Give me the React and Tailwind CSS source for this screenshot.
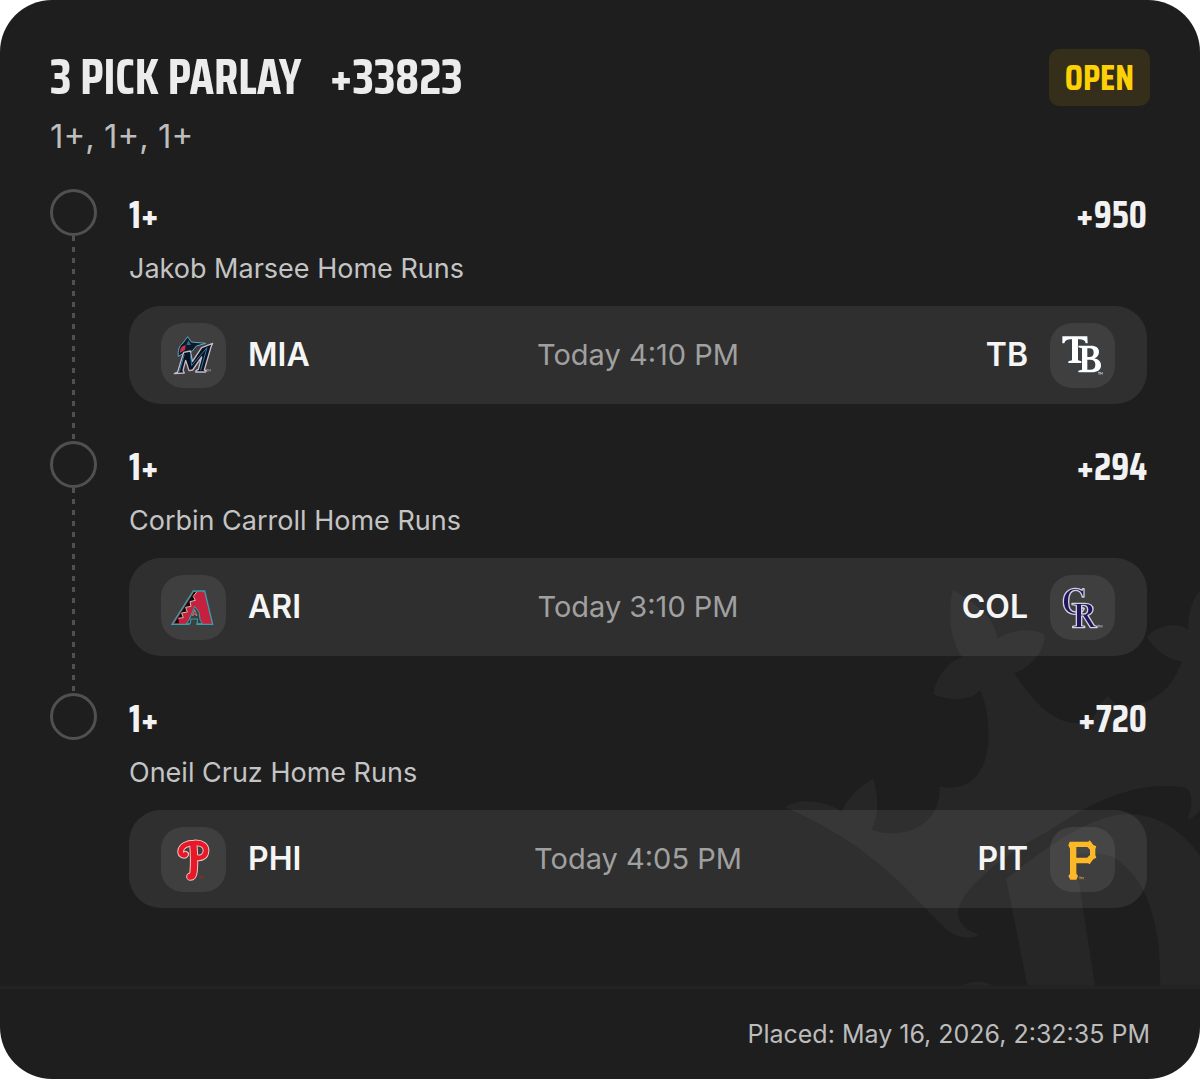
import React from "react";

const display = "font-['Saira_Condensed','Roboto_Condensed','Open_Sans_Condensed','Liberation_Sans_Narrow',sans-serif] font-bold";

function TradeMark({ x, y, color }) {
  return (
    <path
      d={`M${x} ${y - 7} h6 m-3 0 v7 M${x + 7} ${y} v-7 l3 4 l3 -4 v7`}
      fill="none"
      stroke={color}
      strokeWidth="1.5"
    />
  );
}

function Marlins() {
  return (
    <svg viewBox="0 0 195 195" className="h-full w-full" aria-hidden="true">
      <g strokeLinejoin="round">
        <path d="M52 100 C50 84 54 68 66 60 L80 41 L91 57 L134 61 L106 69 L94 84 L66 92 Z" fill="#101a26" stroke="#5fa9c4" strokeWidth="3" />
        <path d="M57 90 C56 76 64 68 74 67 L72 80 Z" fill="#c8324d" />
        <path d="M76 66 L82 52 L90 66 Z" fill="#2c6f92" />
        <path d="M40 152 L50 147 L68 88 L88 84 L94 116 L122 74 L155 61 L150 72 L130 141 L136 143 L134 147 L104 147 L106 142 L112 139 L122 102 L95 141 L84 143 L74 112 L66 142 L70 150 Z" fill="#0a1120" stroke="#c9bac8" strokeWidth="4" />
        <path d="M55 146 L70 94 M88 90 L92 128 L138 74 M138 74 L119 142" fill="none" stroke="#2c7ea5" strokeWidth="3" />
        <TradeMark x={136} y={146} color="#a8a8a8" />
      </g>
    </svg>
  );
}

function Rays() {
  return (
    <svg viewBox="0 0 195 195" className="h-full w-full" aria-hidden="true">
      <g fill="#fff" fillRule="evenodd" stroke="#2c4058" strokeWidth="3" paintOrder="stroke">
        <path d="M37 40 H112 L113 61 H107 C105 52 100 49 84 49 V112 L95 115 V120 H55 V115 L66 112 V49 C50 49 46 52 43 61 H37 Z" />
        <path d="M85 68 H122 C140 68 147 76 147 87 C147 97 141 103 133 106 C146 109 153 116 153 127 C153 141 143 148 125 148 H85 V143 L96 140 V76 L85 73 Z M112 76 V102 H118 C127 102 131 97 131 89 C131 80 127 76 118 76 Z M112 110 V140 H120 C131 140 136 135 136 125 C136 115 131 110 120 110 Z" />
      </g>
      <TradeMark x={144} y={155} color="#fff" />
    </svg>
  );
}

function Diamondbacks() {
  return (
    <svg viewBox="0 0 195 195" className="h-full w-full" aria-hidden="true">
      <path d="M33 148 L97 48 H131 L155 148 H108 L113 132 L100 105 L86 130 L84 148 Z" fill="#c5203e" stroke="#35a1aa" strokeWidth="4" />
      <path d="M40 145 L99 51 H107 L97 64 L103 76 L87 80 L90 94 L74 97 L79 111 L62 114 L67 128 L52 130 L54 145 Z" fill="#0c0c0f" />
      <path d="M107 51 L97 64 L103 76 L87 80 L90 94 L74 97 L79 111 L62 114 L67 128 L52 130" fill="none" stroke="#d9b9a4" strokeWidth="3" />
      <path d="M101 94 L114 112 L117 133 L124 146 H108 L110 132 H90 L88 146 H76 L86 132 Z" fill="#3d3d3d" stroke="#35a1aa" strokeWidth="3" />
      <path d="M101 104 L108 122 L101 118 L94 122 Z" fill="#c5203e" stroke="#b8a9a0" strokeWidth="2" />
    </svg>
  );
}

function Rockies() {
  return (
    <svg viewBox="0 0 195 195" className="h-full w-full" aria-hidden="true">
      <g fill="#24135f" fillRule="evenodd" stroke="#cfd3da" strokeWidth="4" strokeLinejoin="round">
        <path d="M102 41 V66 H97 C94 52 87 46 77 46 C62 46 56 60 56 80 C56 99 63 111 77 111 C87 111 93 106 98 98 L103 101 C97 113 88 118 75 118 C53 118 40 102 40 80 C40 56 54 40 76 40 C86 40 92 43 96 46 L98 41 Z" />
        <path d="M66 85 H104 C121 85 129 92 129 103 C129 112 123 118 114 121 L133 152 L141 154 V158 H121 L99 123 H95 V152 L104 154 V158 H68 V154 L79 152 V91 L66 89 Z M95 91 V117 H100 C109 117 113 112 113 104 C113 95 109 91 100 91 Z" />
      </g>
      <TradeMark x={143} y={158} color="#cfd3da" />
    </svg>
  );
}

function Phillies() {
  const loop = "M74 82 C70 88 58 84 59 73 C60 56 80 48 98 48 C124 46 136 57 135 72 C134 90 118 96 103 91";
  const stem = "M97 52 C100 90 100 112 98 132 C97 146 93 149 88 149";
  return (
    <svg viewBox="0 0 195 195" className="h-full w-full" aria-hidden="true">
      <g fill="none" strokeLinecap="round" strokeLinejoin="round">
        <g stroke="#eec9c2">
          <path d={loop} strokeWidth="20" />
          <path d={stem} strokeWidth="25" />
        </g>
        <g stroke="#e81828">
          <path d={loop} strokeWidth="14" />
          <path d={stem} strokeWidth="19" />
        </g>
      </g>
      <TradeMark x={114} y={154} color="#c01f2c" />
    </svg>
  );
}

function Pirates() {
  return (
    <svg viewBox="0 0 195 195" className="h-full w-full" aria-hidden="true">
      <path
        fillRule="evenodd"
        fill="#fdb827"
        d="M59 44 L115 44 L119 40 L124 46 L130 54 L139 58 L136 66 L136 84 L139 92 L130 97 L124 104 L119 112 L114 109 L79 109 L79 140 L84 147 L79 158 L61 158 L55 147 L60 140 L60 65 L55 55 Z M79 60 L79 92 L111 92 L120 84 L120 68 L112 60 Z"
      />
      <TradeMark x={87} y={157} color="#e8b04a" />
    </svg>
  );
}

function CrownWatermark() {
  return (
    <svg viewBox="0 0 1320 1280" className="absolute right-0 bottom-0 w-[440px]" fill="#262626" aria-hidden="true">
      <path d="M75 745 C110 718 190 720 245 758 C262 715 300 680 340 660 C355 710 358 765 335 812 C430 845 545 800 538 682 C610 700 685 660 685 530 C685 470 675 420 660 395 C620 430 560 425 520 405 C530 350 570 300 608 297 C565 240 565 150 578 92 C640 130 705 170 712 240 C750 210 830 205 855 230 C850 290 800 330 763 342 C820 430 880 492 950 492 C990 492 1010 470 1015 440 L1043 410 L1070 438 C1150 448 1230 410 1265 308 C1220 300 1180 270 1160 232 C1200 195 1250 190 1285 212 C1285 150 1300 120 1320 95 V755 L1290 782 L1284 774 C1298 740 1300 690 1270 685 C1100 660 950 760 860 820 C740 880 600 990 594 1060 C594 1100 630 1118 655 1125 C650 1140 600 1140 570 1120 C500 1060 450 990 350 910 C280 850 180 790 75 745 Z" />
      <path d="M738 960 C840 880 980 770 1100 765 C1200 765 1270 820 1320 890 V1280 H1200 C1205 1120 1170 960 1060 895 C1020 880 970 880 945 890 L1005 1280 H802 Z" />
      <path d="M605 1280 C630 1264 670 1264 700 1280 Z" />
    </svg>
  );
}

function Tile({ children }) {
  return <span className="block size-[65px] shrink-0 overflow-hidden rounded-[22px] bg-white/8">{children}</span>;
}

const legs = [
  { player: "Jakob Marsee", odds: "+950", time: "Today 4:10 PM", away: "MIA", home: "TB", AwayLogo: Marlins, HomeLogo: Rays },
  { player: "Corbin Carroll", odds: "+294", time: "Today 3:10 PM", away: "ARI", home: "COL", AwayLogo: Diamondbacks, HomeLogo: Rockies },
  { player: "Oneil Cruz", odds: "+720", time: "Today 4:05 PM", away: "PHI", home: "PIT", AwayLogo: Phillies, HomeLogo: Pirates },
];

function Leg({ leg, last }) {
  const { AwayLogo, HomeLogo } = leg;
  return (
    <li className="flex gap-8">
      <div className="flex w-[47px] shrink-0 flex-col items-center">
        <span className="size-[47px] shrink-0 rounded-full border-3 border-[#505050]" />
        {!last && (
          <span className="w-[3px] flex-1 bg-[repeating-linear-gradient(to_bottom,#505050_0_5px,transparent_5px_11px)]" />
        )}
      </div>
      <div className={last ? "min-w-0 flex-1" : "min-w-0 flex-1 pb-[37px]"}>
        <div className={`${display} flex h-[53px] items-center justify-between text-[38px] text-[#f2f2f2]`}>
          <h2>1+</h2>
          <span>{leg.odds}</span>
        </div>
        <p className="text-[27px] leading-[53px] text-[#c4c4c4]">{leg.player} Home Runs</p>
        <div className="mt-[11px] grid grid-cols-[1fr_auto_1fr] items-center rounded-[32px] bg-white/8 px-8 py-4 text-[32px] leading-[66px] font-semibold text-[#f5f5f5]">
          <div className="flex items-center gap-[22px]">
            <Tile><AwayLogo /></Tile>
            <span>{leg.away}</span>
          </div>
          <time className="text-[29px] font-normal text-[#a0a0a0]">{leg.time}</time>
          <div className="flex items-center justify-end gap-[22px]">
            <span>{leg.home}</span>
            <Tile><HomeLogo /></Tile>
          </div>
        </div>
      </div>
    </li>
  );
}

export default function App() {
  return (
    <div className="bg-white pb-px font-['Inter',sans-serif]">
      <article className="overflow-hidden rounded-[52px] bg-[#1e1e1e]">
        <main className="relative px-[50px] pt-[49px] pb-[78px]">
          <CrownWatermark />
          <div className="relative">
            <header>
              <div className="flex h-[57px] items-center justify-between">
                <h1 className={`${display} flex gap-7 text-[49px] text-[#ececec]`}>
                  <span>3 PICK PARLAY</span>
                  <span>+33823</span>
                </h1>
                <span className={`${display} flex h-[57px] items-center rounded-[10px] bg-[#342e1a] px-4 text-[36px] text-[#fdd106]`}>OPEN</span>
              </div>
              <p className="mt-2 text-[33px] leading-[44px] text-[#bdbdbd]">1+, 1+, 1+</p>
            </header>
            <ul className="mt-[31px] pr-[3px]">
              {legs.map((leg, i) => (
                <Leg key={leg.player} leg={leg} last={i === legs.length - 1} />
              ))}
            </ul>
          </div>
        </main>
        <footer className="border-t-3 border-[#232323] px-[50px] py-[27px] text-right text-[25px] leading-9 text-[#bcbcbc]">
          Placed: May 16, 2026, 2:32:35 PM
        </footer>
      </article>
    </div>
  );
}
